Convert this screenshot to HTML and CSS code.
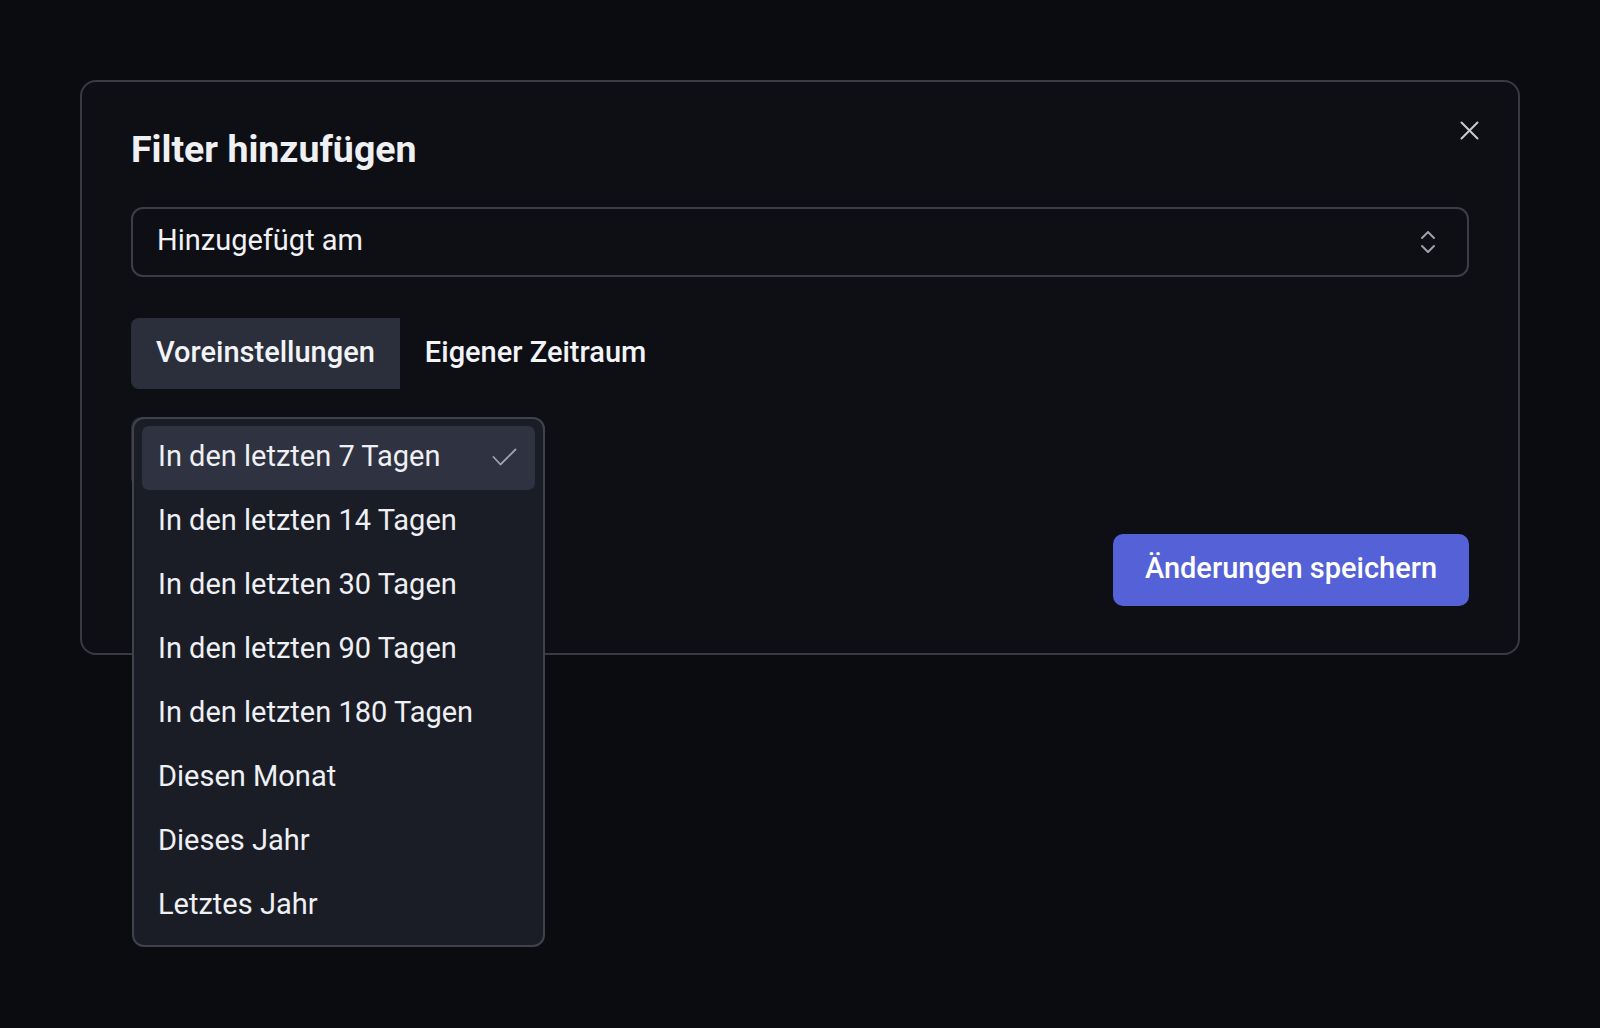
FILE: index.html
```html
<!DOCTYPE html>
<html lang="de">
  <head>
    <meta charset="utf-8">
    <title>Filter hinzufügen</title>
    <link rel="stylesheet" href="styles.css">
  </head>
  <body>

  <div class="modal">
    <button class="close" type="button" aria-label="Schließen">
      <svg width="19" height="19" viewBox="0 0 19 19" fill="none" stroke="currentColor" stroke-width="2" stroke-linecap="round">
        <path d="M1.5 1.5 L17.5 17.5 M17.5 1.5 L1.5 17.5"/>
      </svg>
    </button>

    <h2 class="title">Filter hinzufügen</h2>

    <div class="select">
      <span class="select-value">Hinzugefügt am</span>
      <svg class="select-icon" width="16" height="24" viewBox="0 0 16 24" fill="none" stroke="currentColor" stroke-width="2" stroke-linecap="round" stroke-linejoin="round">
        <path d="M2 8 L8 2 L14 8"/>
        <path d="M2 16 L8 22 L14 16"/>
      </svg>
    </div>

    <div class="tabs">
      <span class="tab active">Voreinstellungen</span>
      <span class="tab">Eigener Zeitraum</span>
    </div>

    <div class="preset">
      <div class="preset-trigger"></div>

      <ul class="listbox">
        <li class="option selected">
          <span>In den letzten 7 Tagen</span>
          <svg width="25" height="18" viewBox="0 0 25 18" fill="none" stroke="currentColor" stroke-width="1.8" stroke-linecap="round" stroke-linejoin="round">
            <path d="M1.5 9 L8.5 16.5 L23.5 1.5"/>
          </svg>
        </li>
        <li class="option">In den letzten 14 Tagen</li>
        <li class="option">In den letzten 30 Tagen</li>
        <li class="option">In den letzten 90 Tagen</li>
        <li class="option">In den letzten 180 Tagen</li>
        <li class="option">Diesen Monat</li>
        <li class="option">Dieses Jahr</li>
        <li class="option">Letztes Jahr</li>
      </ul>
    </div>

    <div class="footer">
      <button class="save" type="button">Änderungen speichern</button>
    </div>
  </div>

  </body>
</html>
```

FILE: styles.css
```css
html {
  height: 100%;
}
body {
  margin: 0;
  padding: 80px 80px 0;
  background: #0b0c10;
  color: #f1f2f6;
  font-family: "Roboto", "Inter", sans-serif;
  font-size: 29px;
  height: 100%;
  box-sizing: border-box;
}

.modal {
  position: relative;
  display: flex;
  flex-direction: column;
  background: #0e0f14;
  border: 2px solid #383a44;
  border-radius: 16px;
  padding: 45px 49px 47px;
}

.close {
  position: absolute;
  top: 39px;
  right: 39px;
  width: 19px;
  height: 19px;
  padding: 0;
  border: 0;
  background: none;
  color: #c9cbd1;
  cursor: pointer;
}
.close svg {
  display: block;
}

.title {
  margin: 0;
  font-size: 37.5px;
  line-height: 45px;
  font-weight: 700;
  color: #eff0f4;
}

.select {
  margin-top: 35px;
  height: 70px;
  box-sizing: border-box;
  border: 2px solid #3b3e49;
  border-radius: 12px;
  padding: 0 31px 0 24px;
  display: flex;
  align-items: center;
  justify-content: space-between;
}
.select-value {
  position: relative;
  top: -2px;
}
.select-icon {
  color: #9ea1a9;
}

.tabs {
  margin-top: 41px;
  display: flex;
}
.tab {
  height: 71px;
  box-sizing: border-box;
  padding: 0 25px 4px;
  display: flex;
  align-items: center;
  font-weight: 500;
  color: #f3f4f7;
}
.tab.active {
  background: #2b2f3b;
  border-radius: 8px 0 0 8px;
}

.preset {
  position: relative;
  margin-top: 28px;
  height: 71px;
}
.preset-trigger {
  width: 380px;
  height: 71px;
  background: #272a35;
  border-radius: 10px;
}

.listbox {
  position: absolute;
  top: 0;
  left: 1px;
  z-index: 2;
  width: 413px;
  box-sizing: border-box;
  margin: 0;
  padding: 7px 8px;
  list-style: none;
  background: #1a1d26;
  border: 2px solid #40434e;
  border-radius: 12px;
}

.option {
  height: 64px;
  box-sizing: border-box;
  padding: 0 18px 4px 16px;
  display: flex;
  align-items: center;
  justify-content: space-between;
  border-radius: 7px;
  color: #eef0f4;
}
.option.selected {
  background: #2e3241;
}
.option svg {
  color: #a0a3ab;
  margin-top: 2px;
}

.footer {
  margin-top: 46px;
  display: flex;
  justify-content: flex-end;
}

.save {
  width: 356px;
  height: 72px;
  border: 0;
  border-radius: 10px;
  padding: 0 0 4px;
  background: #5461d7;
  color: #ffffff;
  font: 500 29px "Roboto", "Inter", sans-serif;
  cursor: pointer;
}
```
